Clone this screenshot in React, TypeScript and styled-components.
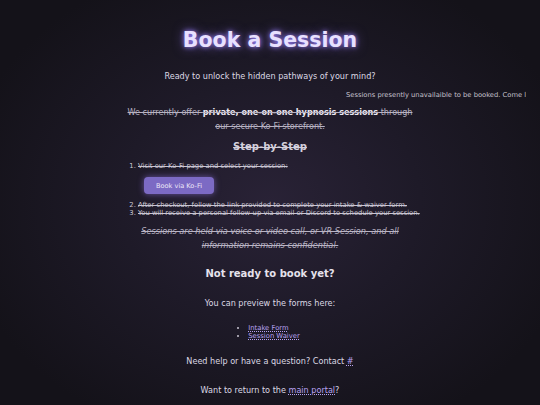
import styled, { createGlobalStyle } from "styled-components";

const GlobalStyle = createGlobalStyle`
  html, body {
    margin: 0;
    padding: 0;
    height: 100%;
  }
  body {
    background: #131119;
    font-family: "DejaVu Sans", Verdana, sans-serif;
    color: #d6d2de;
  }
`;

const Page = styled.div`
  width: 540px;
  height: 405px;
  overflow: hidden;
  background: radial-gradient(ellipse 58% 62% at 50% 50%, #292236 0%, #1e1a28 48%, #141219 100%);
  display: flex;
  flex-direction: column;
  align-items: center;
  padding-top: 28px;
  box-sizing: border-box;
`;

const Title = styled.h1`
  margin: 0;
  font-size: 20.5px;
  line-height: 24px;
  font-weight: 700;
  color: #e8e0ff;
  text-shadow: 0 0 5px #9d82ff, 0 0 12px rgba(150, 120, 255, 0.55);
`;

const Lead = styled.p<{ $top: number }>`
  margin: ${(p) => p.$top}px 0 0;
  font-size: 8.1px;
  line-height: 14px;
  color: #dcd8e4;
  text-align: center;
`;

const MarqueeRow = styled.div`
  align-self: stretch;
  margin: 7px 14px 0 12px;
  overflow: hidden;
  white-space: nowrap;
  font-size: 6.75px;
  line-height: 10px;
  color: #c4c0cc;
`;

const MarqueeText = styled.span`
  display: inline-block;
  padding-left: 334px;
`;

const Content = styled.div`
  width: 300px;
  display: flex;
  flex-direction: column;
  align-items: stretch;
`;

const Offer = styled.p`
  margin: 5px 0 0;
  font-size: 8.1px;
  line-height: 14px;
  text-align: center;
  color: #b7b2c2;
  text-decoration: line-through;

  strong {
    color: #ece8f2;
  }
`;

const StepTitle = styled.h3`
  margin: 7px 0 0;
  font-size: 10px;
  line-height: 14px;
  font-weight: 700;
  text-align: center;
  color: #d4d0dc;
  text-decoration: line-through;
`;

const Steps = styled.ol`
  margin: 8px 0 0;
  padding-left: 18px;
  font-size: 6.8px;
  line-height: 8px;
  color: #c9c5d2;
`;

const Step = styled.li<{ $top?: number }>`
  margin-top: ${(p) => p.$top ?? 0}px;

  & > span {
    text-decoration: line-through;
  }
`;

const KofiButton = styled.button`
  display: block;
  margin: 7px 0 0 6px;
  width: 70px;
  height: 17px;
  padding: 0;
  border: none;
  border-radius: 4px;
  background: #7c6ac4;
  color: #ece8f8;
  font-family: inherit;
  font-size: 6.6px;
  box-shadow: 0 0 6px rgba(150, 120, 235, 0.6);
  cursor: pointer;
`;

const Note = styled.p`
  margin: 7px 0 0;
  font-size: 8.2px;
  line-height: 14px;
  font-style: italic;
  text-align: center;
  color: #b9b4c4;
  text-decoration: line-through;
`;

const SubHeading = styled.h2`
  margin: 15px 0 0;
  font-size: 10px;
  line-height: 14px;
  font-weight: 700;
  color: #e6e2ec;
  text-align: center;
`;

const FormList = styled.ul`
  margin: 14px 0 0;
  padding-left: 8px;
  font-size: 6.8px;
  line-height: 8px;
  color: #c9c5d2;

  li::marker {
    font-size: 6px;
  }
`;

const Link = styled.a`
  color: #b8a2f0;
  text-decoration: underline dotted;
  text-underline-offset: 1px;
`;

export default function App() {
  return (
    <>
      <GlobalStyle />
      <Page>
        <Title>Book a Session</Title>
        <Lead $top={17}>Ready to unlock the hidden pathways of your mind?</Lead>
        <MarqueeRow>
          <MarqueeText>Sessions presently unavailaible to be booked. Come later!</MarqueeText>
        </MarqueeRow>
        <Content>
          <Offer>
            We currently offer <strong>private, one-on-one hypnosis sessions</strong> through our secure Ko-Fi
            storefront.
          </Offer>
          <StepTitle>Step-by-Step</StepTitle>
          <Steps>
            <Step>
              <span>Visit our Ko-Fi page and select your session:</span>
              <KofiButton>Book via Ko-Fi</KofiButton>
            </Step>
            <Step $top={7}>
              <span>After checkout, follow the link provided to complete your intake &amp; waiver form.</span>
            </Step>
            <Step>
              <span>You will receive a personal follow-up via email or Discord to schedule your session.</span>
            </Step>
          </Steps>
          <Note>
            Sessions are held via voice or video call, or VR Session, and all information remains confidential.
          </Note>
        </Content>
        <SubHeading>Not ready to book yet?</SubHeading>
        <Lead $top={15}>You can preview the forms here:</Lead>
        <FormList>
          <li>
            <Link href="#">Intake Form</Link>
          </li>
          <li>
            <Link href="#">Session Waiver</Link>
          </li>
        </FormList>
        <Lead $top={14}>
          Need help or have a question? Contact <Link href="#">#</Link>
        </Lead>
        <Lead $top={15}>
          Want to return to the <Link href="#">main portal</Link>?
        </Lead>
      </Page>
    </>
  );
}
